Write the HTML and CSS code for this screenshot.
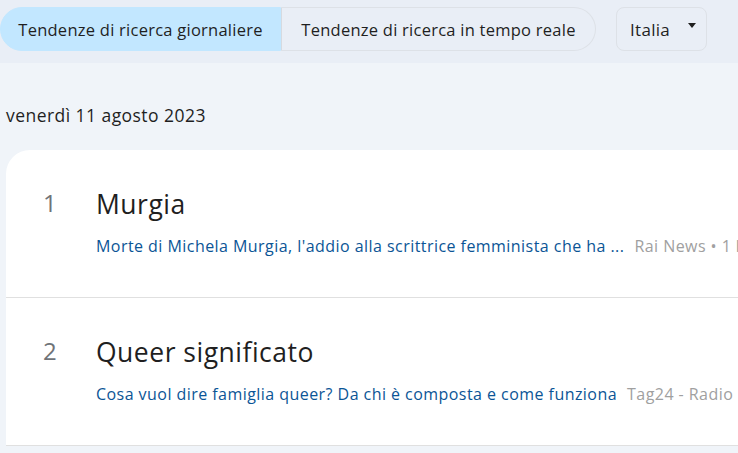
FILE: index.html
```html
<!DOCTYPE html>
<html lang="it">
<head>
<meta charset="utf-8">
<link rel="stylesheet" href="styles.css">
</head>
<body>
<header class="topbar">
  <div class="segmented">
    <button class="seg seg-active">Tendenze di ricerca giornaliere</button>
    <button class="seg">Tendenze di ricerca in tempo reale</button>
  </div>
  <button class="geo">Italia <span class="caret"></span></button>
</header>
<main class="content">
  <div class="date">venerdì 11 agosto 2023</div>
  <section class="card">
    <div class="row">
      <div class="rank">1</div>
      <div class="info">
        <div class="title">Murgia</div>
        <div class="news"><span class="link">Morte di Michela Murgia, l'addio alla scrittrice femminista che ha ...</span><span class="src">Rai News • 1 h fa</span></div>
      </div>
    </div>
    <div class="row">
      <div class="rank">2</div>
      <div class="info">
        <div class="title">Queer significato</div>
        <div class="news"><span class="link">Cosa vuol dire famiglia queer? Da chi è composta e come funziona</span><span class="src">Tag24 - Radio</span></div>
      </div>
    </div>
  </section>
</main>
</body>
</html>
```
FILE: styles.css
```css
* { box-sizing: border-box; }
html, body { margin: 0; padding: 0; }
body {
  width: 738px;
  height: 453px;
  overflow: hidden;
  background: #f0f4f9;
  font-family: "Open Sans", "Liberation Sans", sans-serif;
  color: #1f1f1f;
}
.topbar {
  height: 63px;
  background: #e9eef6;
  display: flex;
  align-items: flex-start;
  padding-top: 7px;
  gap: 20px;
}
.segmented {
  display: flex;
  width: 596px;
  height: 44px;
}
.seg {
  font: inherit;
  font-size: 16.5px;
  letter-spacing: 0.25px;
  color: #1f1f1f;
  border: 1px solid #dde1e7;
  background: transparent;
  padding: 0;
  height: 44px;
}
.seg-active {
  width: 281px;
  background: #c2e7ff;
  border-color: #c2e7ff;
  border-radius: 22px 0 0 22px;
}
.seg:not(.seg-active) {
  flex: 1;
  border-radius: 0 22px 22px 0;
  border-left: 1px solid #d6dae0;
}
.geo {
  width: 91px;
  height: 44px;
  font: inherit;
  font-size: 17px;
  letter-spacing: 0.3px;
  color: #1f1f1f;
  border: 1px solid #dde1e7;
  border-radius: 8px;
  background: transparent;
  display: flex;
  align-items: center;
  padding: 0 0 0 13px;
  gap: 18px;
}
.caret {
  width: 0; height: 0;
  border-left: 4px solid transparent;
  border-right: 4px solid transparent;
  border-top: 5px solid #1f1f1f;
  margin-top: -8px;
}
.content { padding: 0 0 0 6px; }
.date {
  font-size: 17.5px;
  letter-spacing: 0.45px;
  line-height: 20px;
  padding-top: 42px;
  height: 87px;
}
.card {
  background: #fff;
  border-top-left-radius: 24px;
}
.row {
  display: flex;
  height: 148px;
  border-bottom: 1px solid #e0e0e0;
  padding-top: 35px;
}
.rank {
  width: 90px;
  padding-left: 37px;
  font-size: 24px;
  line-height: 34px;
  color: #6f7378;
  padding-top: 1px;
}
.info { flex: 1; white-space: nowrap; overflow: hidden; }
.title {
  font-size: 26.5px;
  letter-spacing: 0.5px;
  line-height: 34px;
  margin-top: 2px;
  color: #1f1f1f;
}
.news {
  margin-top: 15px;
  font-size: 16px;
  letter-spacing: 0.45px;
  line-height: 20px;
}
.link { color: #0b5596; margin-right: 10px; }
.src { color: #a0a0a0; }
```
